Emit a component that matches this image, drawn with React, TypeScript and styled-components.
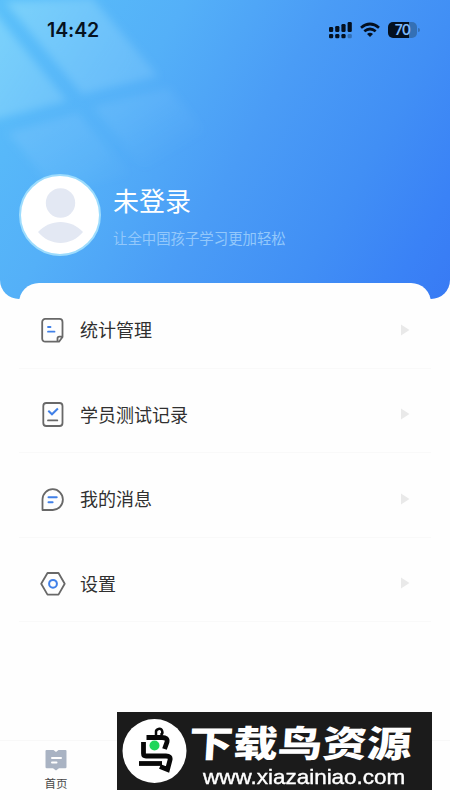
import React from 'react';
import styled, { createGlobalStyle } from 'styled-components';

const GlobalStyle = createGlobalStyle`
  * { box-sizing: border-box; }
  body { margin: 0; background: #fefefe; overflow: hidden; }
`;

const Screen = styled.main`
  width: 450px;
  height: 800px;
  display: flex;
  flex-direction: column;
  background: #fefefe;
  overflow: hidden;
  font-family: 'Noto Sans CJK SC', sans-serif;
`;

const Hero = styled.header`
  position: relative;
  flex: none;
  height: 299px;
  border-radius: 0 0 19px 19px;
  overflow: hidden;
  background: linear-gradient(120deg, #5ac0fa 0%, #54b0f8 30%, #4a9cf6 53%, #418ff5 74%, #3a82f6 90%, #387af4 100%);
`;

const LightPanes = styled.svg`
  position: absolute;
  inset: 0;
  overflow: hidden;
`;

const StatusBar = styled.div`
  position: relative;
  display: flex;
  align-items: center;
  height: 60px;
  padding: 0 30px 0 47px;
`;

const Clock = styled.span`
  flex: 1;
  font: 600 19.5px/24px Inter, sans-serif;
  letter-spacing: -0.1px;
  color: #06121f;
`;

const StatusIcons = styled.div`
  display: flex;
  align-items: center;
  gap: 8px;
`;

const Battery = styled.div`
  position: relative;
  display: flex;
  align-items: center;
  justify-content: center;
  width: 29px;
  height: 16px;
  border-radius: 5px;
  background: linear-gradient(90deg, #04101f 0 72%, #3470b5 72%);
  font: 600 14px/16px Inter, sans-serif;
  letter-spacing: -0.8px;
  color: #7cb8fa;
  margin-right: 3px;
  &::after {
    content: '';
    position: absolute;
    right: -3px;
    top: 6px;
    width: 2px;
    height: 4px;
    border-radius: 0 2px 2px 0;
    background: #3470b5;
  }
`;

const Profile = styled.section`
  position: relative;
  display: flex;
  align-items: flex-start;
  gap: 12px;
  padding: 114px 19px 0;
`;

const Avatar = styled.div`
  width: 82px;
  height: 82px;
  border: 2.5px solid #9ddcfd;
  border-radius: 50%;
  background: #fff;
  overflow: hidden;
`;

const ProfileText = styled.div`
  display: flex;
  flex-direction: column;
  padding-top: 8px;
`;

const UserName = styled.h1`
  margin: 0;
  font-size: 26px;
  line-height: 36px;
  font-weight: 400;
  color: #fff;
`;

const Slogan = styled.p`
  margin: 10px 0 0;
  font-size: 14.4px;
  line-height: 20px;
  font-weight: 400;
  color: #93c8fb;
`;

const Menu = styled.nav`
  position: relative;
  flex: none;
  margin: -16px 19px 0;
  height: 457px;
  border-radius: 20px 20px 0 0;
  background: #fefefe;
  padding-top: 1px;
`;

const MenuRow = styled.div`
  display: flex;
  align-items: center;
  height: 84.5px;
  padding: 8px 21px 0 20px;
  border-bottom: 1px solid #f9f9f9;
`;

const RowIcon = styled.svg`
  width: 28px;
  height: 28px;
  fill: none;
  stroke: #686868;
  stroke-width: 1.8;
  stroke-linejoin: round;
  stroke-linecap: round;
`;

const RowLabel = styled.span`
  flex: 1;
  margin: -1px 0 0 13px;
  font-size: 18px;
  line-height: 26px;
  color: #303030;
`;

const TabBar = styled.footer`
  flex: 1;
  display: flex;
  border-top: 1px solid #f8f8f8;
`;

const Tab = styled.div`
  width: 112px;
  display: flex;
  flex-direction: column;
  align-items: center;
  padding-top: 8px;
  gap: 4px;
  font-size: 11.5px;
  line-height: 17px;
  color: #484848;
`;

const Watermark = styled.aside`
  position: absolute;
  left: 117px;
  top: 712px;
  width: 315px;
  height: 78px;
  display: flex;
  align-items: center;
  gap: 2px;
  padding-left: 5px;
  background: #1b1b1b;
  color: #fff;
`;

const Brand = styled.div`
  display: flex;
  flex-direction: column;
  width: 225px;
  height: 78px;
  padding-top: 8px;
`;

const BrandName = styled.strong`
  width: 180px;
  font-size: 36.5px;
  line-height: 44px;
  font-weight: 900;
  white-space: nowrap;
  transform: scaleX(1.22) skewX(-3deg);
  transform-origin: 0 50%;
`;

const BrandUrl = styled.span`
  width: 185px;
  margin: 1px 0 0 14px;
  font: 21px/24px 'Liberation Sans', sans-serif;
  -webkit-text-stroke: 0.4px #fff;
  transform: scaleX(1.07);
  transform-origin: 0 50%;
  white-space: nowrap;
`;

const BLUE = '#4080e8';

const icons: Record<string, React.ReactNode> = {
  stats: (
    <>
      <path d="M20 25.7H6.200a3 3 0 0 1-3-3V5.900a3 3 0 0 1 3-3H20.500a3 3 0 0 1 3 3V21ZM23.500 20.700H20.300a1.800 1.800 0 0 0-1.800 1.800V25.500" />
      <path stroke={BLUE} d="M9 11H11.500M9 15.700H15.500" />
    </>
  ),
  tests: (
    <>
      <rect x="4.300" y="3" width="19.200" height="23" rx="3" />
      <path d="M9 20.400H18.300" />
      <path stroke={BLUE} strokeWidth="2" strokeLinecap="butt" strokeLinejoin="miter" d="M9.300 10.700L13 14.300L18.900 8.500" />
    </>
  ),
  messages: (
    <>
      <path d="M3.500 25V14.300a10.200 10.400 0 1 1 10.400 10.700Z" />
      <path stroke={BLUE} strokeWidth="2" d="M9.500 12.300H17.700M9.500 17.300H13.600" />
    </>
  ),
  settings: (
    <>
      <path d="M8.500 4H19.500L25.700 14.800L19.500 25.600H8.500L2.200 14.800Z" />
      <circle stroke={BLUE} strokeWidth="2" cx="14" cy="14.800" r="3.900" />
    </>
  ),
};

const rows = [
  { icon: 'stats', label: '统计管理' },
  { icon: 'tests', label: '学员测试记录' },
  { icon: 'messages', label: '我的消息' },
  { icon: 'settings', label: '设置' },
];

const signalBars = [5, 6, 8, 10];

export default function App() {
  return (
    <Screen>
      <GlobalStyle />
      <Hero>
        <LightPanes width="450" height="299" viewBox="0 0 450 299">
          <defs>
            <filter id="soft" x="-20%" y="-20%" width="140%" height="140%">
              <feGaussianBlur stdDeviation="4" />
            </filter>
            <linearGradient id="pane" gradientUnits="userSpaceOnUse" x1="0" y1="0" x2="170" y2="110">
              <stop offset="0" stopColor="#9ee5fc" stopOpacity=".5" />
              <stop offset="1" stopColor="#8fcdfd" stopOpacity=".26" />
            </linearGradient>
            <linearGradient id="lower" gradientUnits="userSpaceOnUse" x1="60" y1="100" x2="115" y2="190">
              <stop offset="0" stopColor="#8fcdfd" stopOpacity=".3" />
              <stop offset="1" stopColor="#8fcdfd" stopOpacity="0" />
            </linearGradient>
          </defs>
          <g filter="url(#soft)">
            <path fill="url(#pane)" d="M5 2L92 -2L158 76L82 94Z" />
            <path fill="url(#pane)" d="M-15 1L67 101L-15 122Z" />
            <path fill="url(#lower)" d="M93 107L168 88L215 142L195 170H145Z" />
            <path fill="url(#lower)" d="M8 133L78 113L130 175L55 190Z" />
          </g>
        </LightPanes>
        <StatusBar>
          <Clock>14:42</Clock>
          <StatusIcons>
            <svg width="23" height="17" viewBox="0 0 23 17" fill="#04101f">
              {signalBars.map((h, i) => (
                <g key={h}>
                  <rect x={i * 6.2} y={10 - h} width="4.2" height={h} rx="1.3" />
                  <rect x={i * 6.2} y="12" width="4.2" height="4.200" rx="1.300" opacity={i === 3 ? 0.3 : 1} />
                </g>
              ))}
            </svg>
            <svg width="20" height="16" viewBox="0 0 20 16" fill="none" stroke="#04101f" strokeWidth="2.700">
              <path d="M1 5.700Q10 -1.700 19 5.700M4.300 9.300Q10 4.700 15.700 9.300" />
              <path d="M7 12Q10 9.500 13 12L10 15Z" fill="#04101f" stroke="none" />
            </svg>
            <Battery>70</Battery>
          </StatusIcons>
        </StatusBar>
        <Profile>
          <Avatar>
            <svg width="77" height="77" viewBox="0 0 77 77" fill="#e3e8f3">
              <circle cx="39.500" cy="27" r="14.700" />
              <path d="M17 56C29 42.500 50 42.500 62 56C50 70.500 29 70.500 17 56Z" />
            </svg>
          </Avatar>
          <ProfileText>
            <UserName>未登录</UserName>
            <Slogan>让全中国孩子学习更加轻松</Slogan>
          </ProfileText>
        </Profile>
      </Hero>
      <Menu>
        {rows.map(({ icon, label }) => (
          <MenuRow key={icon}>
            <RowIcon viewBox="0 0 28 28">{icons[icon]}</RowIcon>
            <RowLabel>{label}</RowLabel>
            <svg width="10" height="12" viewBox="0 0 10 12" fill="#e9e9e9">
              <path d="M1 .5L9.500 6L1 11.500Z" />
            </svg>
          </MenuRow>
        ))}
      </Menu>
      <TabBar>
        <Tab>
          <svg width="22" height="22" viewBox="0 0 22 22">
            <path fill="#a9b3c3" d="M1.500 1H8.500L11 3L13.500 1H20.500Q21.500 1 21.500 2V18Q21.500 19.200 20.300 19.200H14L11 21.500L8 19.200H1.700Q.5 19.200.5 18V2Q.5 1 1.500 1Z" />
            <path stroke="#fff" strokeWidth="2" strokeLinecap="round" d="M7 9H16M7 13.500H11.500" />
          </svg>
          首页
        </Tab>
      </TabBar>
      <Watermark>
        <svg width="65" height="66" viewBox="0 0 65 66">
          <circle cx="32.500" cy="33" r="32" fill="#fff" />
          <g fill="none" stroke="#080808" strokeWidth="4.800">
            <path d="M34 18V14.500A3.200 3.200 0 1 1 38.500 17" strokeWidth="2.500" />
            <path d="M24.500 19.500H40Q46 19.500 45 24L42.500 31" />
            <path d="M21.500 24V35.500Q21.500 38 24 38H44Q49 38 48 42L45.500 51.500L38 48.500" />
            <path d="M17 45.500H40" />
          </g>
          <circle cx="32.500" cy="27.500" r="5" fill="#20d65a" />
        </svg>
        <Brand>
          <BrandName>下载鸟资源</BrandName>
          <BrandUrl>www.xiazainiao.com</BrandUrl>
        </Brand>
      </Watermark>
    </Screen>
  );
}
